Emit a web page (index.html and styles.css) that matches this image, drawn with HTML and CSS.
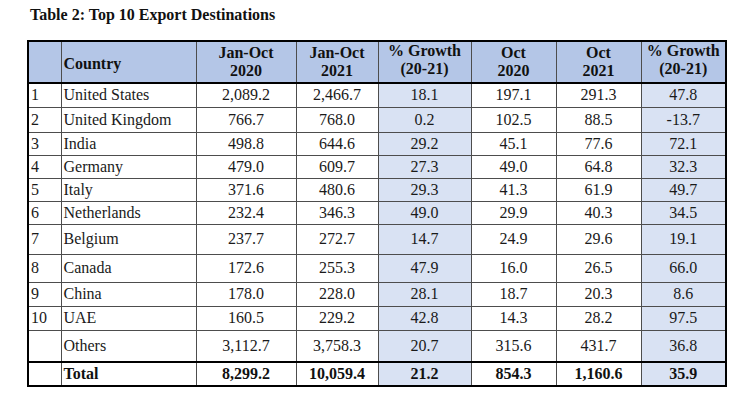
FILE: index.html
```html
<!DOCTYPE html>
<html>
<head>
<meta charset="utf-8">
<link rel="stylesheet" href="styles.css">
</head>
<body>
<div class="page">
  <h1 class="title">Table 2: Top 10 Export Destinations</h1>
  <table class="data">
    <colgroup>
      <col class="c-rank"><col class="c-country"><col class="c-a"><col class="c-b"><col class="c-g"><col class="c-c"><col class="c-d"><col class="c-g2">
    </colgroup>
    <thead>
      <tr class="h42">
        <th class="blank"></th>
        <th class="left">Country</th>
        <th>Jan-Oct<br>2020</th>
        <th>Jan-Oct<br>2021</th>
        <th class="top">% Growth<br>(20-21)</th>
        <th>Oct<br>2020</th>
        <th>Oct<br>2021</th>
        <th class="top">% Growth<br>(20-21)</th>
      </tr>
    </thead>
    <tbody>
      <tr class="h24"><td class="rank">1</td><td class="country">United States</td><td>2,089.2</td><td>2,466.7</td><td class="g">18.1</td><td>197.1</td><td>291.3</td><td class="g">47.8</td></tr>
      <tr class="h25"><td class="rank">2</td><td class="country">United Kingdom</td><td>766.7</td><td>768.0</td><td class="g">0.2</td><td>102.5</td><td>88.5</td><td class="g">-13.7</td></tr>
      <tr class="h23"><td class="rank">3</td><td class="country">India</td><td>498.8</td><td>644.6</td><td class="g">29.2</td><td>45.1</td><td>77.6</td><td class="g">72.1</td></tr>
      <tr class="h23"><td class="rank">4</td><td class="country">Germany</td><td>479.0</td><td>609.7</td><td class="g">27.3</td><td>49.0</td><td>64.8</td><td class="g">32.3</td></tr>
      <tr class="h23"><td class="rank">5</td><td class="country">Italy</td><td>371.6</td><td>480.6</td><td class="g">29.3</td><td>41.3</td><td>61.9</td><td class="g">49.7</td></tr>
      <tr class="h23"><td class="rank">6</td><td class="country">Netherlands</td><td>232.4</td><td>346.3</td><td class="g">49.0</td><td>29.9</td><td>40.3</td><td class="g">34.5</td></tr>
      <tr class="h30"><td class="rank">7</td><td class="country">Belgium</td><td>237.7</td><td>272.7</td><td class="g">14.7</td><td>24.9</td><td>29.6</td><td class="g">19.1</td></tr>
      <tr class="h28"><td class="rank">8</td><td class="country">Canada</td><td>172.6</td><td>255.3</td><td class="g">47.9</td><td>16.0</td><td>26.5</td><td class="g">66.0</td></tr>
      <tr class="h24"><td class="rank">9</td><td class="country">China</td><td>178.0</td><td>228.0</td><td class="g">28.1</td><td>18.7</td><td>20.3</td><td class="g">8.6</td></tr>
      <tr class="h24"><td class="rank">10</td><td class="country">UAE</td><td>160.5</td><td>229.2</td><td class="g">42.8</td><td>14.3</td><td>28.2</td><td class="g">97.5</td></tr>
      <tr class="h32"><td class="rank"></td><td class="country">Others</td><td>3,112.7</td><td>3,758.3</td><td class="g">20.7</td><td>315.6</td><td>431.7</td><td class="g">36.8</td></tr>
      <tr class="h24 total"><td class="rank"></td><td class="country">Total</td><td>8,299.2</td><td>10,059.4</td><td class="g">21.2</td><td>854.3</td><td>1,160.6</td><td class="g">35.9</td></tr>
    </tbody>
  </table>
</div>
</body>
</html>
```

FILE: styles.css
```css
html, body {
  margin: 0;
  padding: 0;
  background: #ffffff;
}

.page {
  padding: 6px 0 0 27px;
  font-family: "Liberation Serif", "Times New Roman", serif;
  color: #1a1a1a;
}

.title {
  margin: 0 0 16px 3px;
  font-size: 16px;
  line-height: 18px;
  font-weight: bold;
  color: #111111;
}

.data {
  border-collapse: collapse;
  table-layout: fixed;
  width: 698px;
  font-size: 16px;
  line-height: 18px;
  border: 2px solid #000000;
}

.c-rank { width: 33px; }
.c-country { width: 135px; }
.c-a { width: 100px; }
.c-b { width: 82px; }
.c-g { width: 93px; }
.c-c { width: 85px; }
.c-d { width: 85px; }
.c-g2 { width: 85px; }

.data th,
.data td {
  border: 1.5px solid #4d4d4d;
  padding: 0 2px;
  text-align: center;
  vertical-align: middle;
  white-space: nowrap;
}

.data th {
  background: #b4c6e7;
  font-weight: bold;
  color: #111111;
  border-bottom: 2px solid #000000;
  border-top: 2px solid #000000;
}

.data th.left {
  text-align: left;
  padding-top: 4px;
}

.data th.top {
  vertical-align: top;
  padding-top: 0;
}

.data td.rank {
  text-align: left;
}

.data td.country {
  text-align: left;
}

.data td.g {
  background: #d9e2f3;
}

.data tr.total td {
  font-weight: bold;
  color: #111111;
  border-top: 2px solid #000000;
}

.h42 { height: 42px; }
.h30 { height: 30px; }
.h32 { height: 32px; }
.h28 { height: 28px; }
.h25 { height: 25px; }
.h24 { height: 24px; }
.h23 { height: 23px; }
```
